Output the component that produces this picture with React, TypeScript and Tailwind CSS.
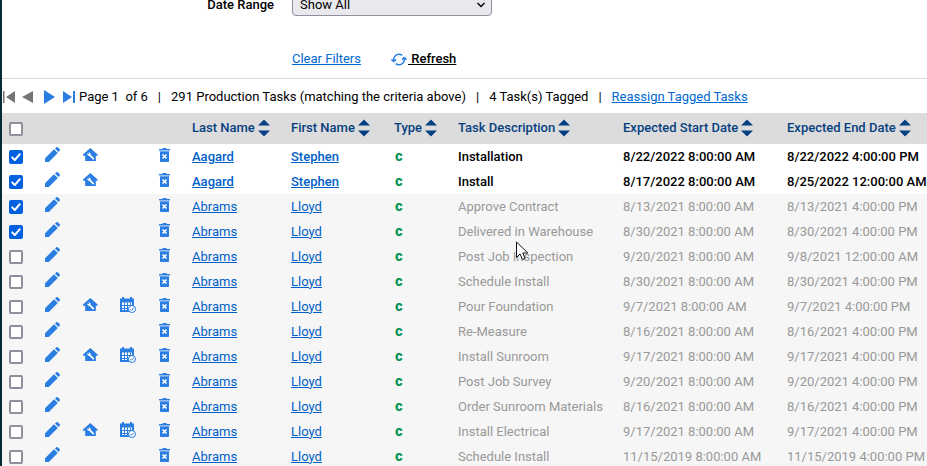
import React, { useState } from "react";

type Task = {
  last: string;
  first: string;
  task: string;
  start: string;
  end: string;
  tagged?: boolean;
  open?: boolean;
  job?: boolean;
  schedule?: boolean;
};

const tasks: Task[] = [
  { last: "Aagard", first: "Stephen", task: "Installation", start: "8/22/2022 8:00:00 AM", end: "8/22/2022 4:00:00 PM", tagged: true, open: true, job: true },
  { last: "Aagard", first: "Stephen", task: "Install", start: "8/17/2022 8:00:00 AM", end: "8/25/2022 12:00:00 AM", tagged: true, open: true, job: true },
  { last: "Abrams", first: "Lloyd", task: "Approve Contract", start: "8/13/2021 8:00:00 AM", end: "8/13/2021 4:00:00 PM", tagged: true },
  { last: "Abrams", first: "Lloyd", task: "Delivered in Warehouse", start: "8/30/2021 8:00:00 AM", end: "8/30/2021 4:00:00 PM", tagged: true },
  { last: "Abrams", first: "Lloyd", task: "Post Job Inspection", start: "9/20/2021 8:00:00 AM", end: "9/8/2021 12:00:00 AM" },
  { last: "Abrams", first: "Lloyd", task: "Schedule Install", start: "8/30/2021 8:00:00 AM", end: "8/30/2021 4:00:00 PM" },
  { last: "Abrams", first: "Lloyd", task: "Pour Foundation", start: "9/7/2021 8:00:00 AM", end: "9/7/2021 4:00:00 PM", job: true, schedule: true },
  { last: "Abrams", first: "Lloyd", task: "Re-Measure", start: "8/16/2021 8:00:00 AM", end: "8/16/2021 4:00:00 PM" },
  { last: "Abrams", first: "Lloyd", task: "Install Sunroom", start: "9/17/2021 8:00:00 AM", end: "9/17/2021 4:00:00 PM", job: true, schedule: true },
  { last: "Abrams", first: "Lloyd", task: "Post Job Survey", start: "9/20/2021 8:00:00 AM", end: "9/20/2021 4:00:00 PM" },
  { last: "Abrams", first: "Lloyd", task: "Order Sunroom Materials", start: "8/16/2021 8:00:00 AM", end: "8/16/2021 4:00:00 PM" },
  { last: "Abrams", first: "Lloyd", task: "Install Electrical", start: "9/17/2021 8:00:00 AM", end: "9/17/2021 4:00:00 PM", job: true, schedule: true },
  { last: "Abrams", first: "Lloyd", task: "Schedule Install", start: "11/15/2019 8:00:00 AM", end: "11/15/2019 4:00:00 PM" },
];

const sortable = ["Last Name", "First Name", "Type", "Task Description", "Expected Start Date", "Expected End Date"];

function Checkbox({ label, initial = false }: { label: string; initial?: boolean }) {
  const [checked, setChecked] = useState(initial);
  return (
    <label className="grid w-[14px]">
      <input
        type="checkbox"
        aria-label={label}
        checked={checked}
        onChange={(e) => setChecked(e.target.checked)}
        className="peer col-start-1 row-start-1 size-[14px] appearance-none rounded-[2px] border-2 border-[#8f8f9d] bg-white checked:border-[#0060df] checked:bg-[#0060df]"
      />
      <svg viewBox="0 0 14 14" className="invisible col-start-1 row-start-1 size-[14px] peer-checked:visible" fill="none" stroke="#fff" strokeWidth="2" strokeLinecap="round" strokeLinejoin="round">
        <path d="M3.2 7.4 5.8 10l5-5.8" />
      </svg>
    </label>
  );
}

function PencilIcon() {
  return (
    <svg viewBox="0 0 16 16" className="size-4" fill="#2a7de1">
      <path d="M0 11.300 9 2.300l3.800 3.800-9 9H0z" />
      <path d="M10 1.500 11.200.4c.5-.5 1.200-.5 1.700 0l1.700 1.700c.5.5.5 1.200 0 1.700L13.500 5z" />
    </svg>
  );
}

function HouseIcon() {
  return (
    <svg viewBox="0 0 15 14" className="h-[14px] w-[15px]" fill="#2a7de1">
      <path d="M7.300 0 14.600 6.500v1.200H12.800V13H2.200V7.700H0V6.500z" />
      <path d="m6 6.300 4.300 4.300" stroke="#fff" strokeWidth="1.700" strokeLinecap="round" />
      <circle cx="5.900" cy="6.100" r="1.700" fill="#fff" />
      <path d="M4 4.100 5.700 5.900" stroke="#2a7de1" strokeWidth="1.200" />
    </svg>
  );
}

function CalendarIcon() {
  return (
    <svg viewBox="0 0 16 16" className="size-4" fill="none">
      <path d="M1 3.500h12v10.500H1z" fill="#fff" stroke="#2a7de1" strokeWidth="2" />
      <path d="M0 1.500h14v4H0zM2 0h2v3H2zM10 0h2v3h-2z" fill="#2a7de1" />
      <path d="M1 8.500h12M1 11.500h12M4.500 5.500v9M7.500 5.500v9M10.500 5.500v9" stroke="#2a7de1" />
      <circle cx="12" cy="12" r="3.500" fill="#fff" stroke="#2a7de1" />
      <path d="m10.500 12.200 1.100 1.100 2.100-2.600" stroke="#2a7de1" />
    </svg>
  );
}

function TrashIcon() {
  return (
    <svg viewBox="0 0 11 14" className="h-[14px] w-[11px]" fill="#2a7de1">
      <path d="M3.500 0h4v1H11v1.300H0V1h3.500z" />
      <path d="M.5 2.300h10v1.500H.5z" opacity=".45" />
      <path d="M1 3.500h9V13c0 .6-.4 1-1 1H2c-.6 0-1-.4-1-1z" />
      <path d="m3.500 6.500 4 4m0-4-4 4" stroke="#fff" strokeWidth="1.600" />
    </svg>
  );
}

function SortIcon() {
  return (
    <svg viewBox="0 0 12 18" className="h-[18px] w-3 shrink-0" fill="#063f80">
      <path d="M6 .5 12 6.500H0zM6 17.500 12 11.500H0z" />
    </svg>
  );
}

function RefreshIcon() {
  return (
    <svg viewBox="0 0 16 14" className="h-[14px] w-4" fill="none" stroke="#2a7de1" strokeWidth="1.500">
      <path d="M2.700 9V7.300C2.700 4.500 5 2.200 8 2.200c1.300 0 2.300.4 3.200 1.200M13.300 6v1.700c0 2.800-2.300 5.100-5.300 5.100-1.300 0-2.300-.4-3.200-1.200" />
      <path d="M.4 7.400 2.700 9.500 5 7.400M11 7.600l2.300-2.100 2.300 2.100" />
    </svg>
  );
}

function Cursor() {
  return (
    <svg viewBox="0 0 13 20" className="pointer-events-none absolute left-[514px] top-[241px] h-5 w-[13px]" fill="#fff" stroke="#10101c">
      <path d="M.5 1v15.500L4 13l2.500 5.500 2.500-1L6.800 12h5z" />
    </svg>
  );
}

function PagerButton({ label, children }: { label: string; children: React.ReactNode }) {
  return (
    <button type="button" aria-label={label} className="flex h-4 items-center">
      {children}
    </button>
  );
}

function IconButton({ label, children }: { label: string; children: React.ReactNode }) {
  return (
    <button type="button" aria-label={label} className="mb-1 flex h-4 items-center">
      {children}
    </button>
  );
}

function Filters() {
  return (
    <form className="border-b border-[#d9d9d9]" onSubmit={(e) => e.preventDefault()}>
      <div className="flex h-4 items-end">
        <label htmlFor="range" className="w-[272px] font-medium leading-[22px] text-right">
          Date Range
        </label>
        <div className="ml-[18px] grid w-[200px] items-center">
          <select id="range" className="col-start-1 row-start-1 h-[22px] w-full appearance-none rounded-[4px] border border-[#8f8f9d] bg-[#e9e9ed] px-[7px] text-black">
            <option>Show All</option>
          </select>
          <svg viewBox="0 0 8 6" className="pointer-events-none col-start-1 row-start-1 mr-[7px] h-[6px] w-2 justify-self-end" fill="none" stroke="#000" strokeWidth="1.500">
            <path d="m.5 1 3.500 3.500L7.500 1" />
          </svg>
        </div>
      </div>
      <div className="ml-[290px] flex items-center gap-[30px] pb-[9px] pt-[33px] leading-5">
        <a href="#clear" className="text-[#0069d2] underline">Clear Filters</a>
        <a href="#refresh" className="flex items-center gap-px font-medium text-black">
          <RefreshIcon />
          <span className="whitespace-pre underline"> Refresh</span>
        </a>
      </div>
    </form>
  );
}

function Pager() {
  return (
    <div className="flex items-center whitespace-pre pb-[7px] pt-[9px] leading-[18px]">
      <nav aria-label="Pages" className="flex items-center">
        <PagerButton label="First page">
          <svg viewBox="0 0 13 14" className="h-[14px] w-[13px]" fill="#757575"><path d="M1 1h1.500v12H1zM13 1v12L4 7z" /></svg>
        </PagerButton>
        <PagerButton label="Previous page">
          <svg viewBox="0 0 18 14" className="h-[14px] w-[18px]" fill="#757575"><path d="M18 1v12L7 7z" /></svg>
        </PagerButton>
        <PagerButton label="Next page">
          <svg viewBox="0 0 22 14" className="h-[14px] w-[22px]" fill="#2a7de1"><path d="M11 0v14L22 7z" /></svg>
        </PagerButton>
        <PagerButton label="Last page">
          <svg viewBox="0 0 20 14" className="h-[14px] w-5" fill="#2a7de1"><path d="M8 1v12l9-6zM18 1h2v12h-2z" /></svg>
        </PagerButton>
      </nav>
      <div className="ml-1 flex gap-[10px]">
        <span>Page 1  of 6</span>
        <span>|</span>
        <span>291 Production Tasks (matching the criteria above)</span>
        <span>|</span>
        <span>4 Task(s) Tagged</span>
        <span>|</span>
        <a href="#reassign" className="text-[#0069d2] underline">Reassign Tagged Tasks</a>
      </div>
    </div>
  );
}

function TaskRow({ t }: { t: Task }) {
  const tone = t.open ? "bg-white font-medium text-black" : "bg-[#f6f6f6] text-[#999999]";
  return (
    <tr className={`h-[25px] ${tone}`}>
      <td className="pl-[7px]"><Checkbox label={`Tag ${t.task}`} initial={t.tagged} /></td>
      <td><IconButton label="Edit"><PencilIcon /></IconButton></td>
      <td>{t.job && <IconButton label="Job"><HouseIcon /></IconButton>}</td>
      <td>{t.schedule && <IconButton label="Schedule"><CalendarIcon /></IconButton>}</td>
      <td><IconButton label="Delete"><TrashIcon /></IconButton></td>
      <td><a href="#last" className="text-[#0060c8] underline">{t.last}</a></td>
      <td><a href="#first" className="text-[#0060c8] underline">{t.first}</a></td>
      <td className="pb-[2px] pl-px font-[Inter,sans-serif] font-extrabold text-[#079455]">c</td>
      <td>{t.task}</td>
      <td>{t.start}</td>
      <td>{t.end}</td>
    </tr>
  );
}

export default function App() {
  return (
    <main className="relative h-screen overflow-hidden border-l-2 border-[#052b35] bg-white font-[Roboto,sans-serif] text-[13px] text-black">
      <Filters />
      <Pager />
      <table className="w-full table-fixed whitespace-nowrap text-left leading-5">
        <colgroup>
          <col className="w-[43px]" />
          <col className="w-[38px]" />
          <col className="w-[37px]" />
          <col className="w-[39px]" />
          <col className="w-[33px]" />
          <col className="w-[99px]" />
          <col className="w-[103px]" />
          <col className="w-[64px]" />
          <col className="w-[165px]" />
          <col className="w-[164px]" />
          <col />
        </colgroup>
        <thead>
          <tr className="h-[31px] bg-[#dcdcdc] text-[#063f80]">
            <th className="pl-[7px]"><Checkbox label="Tag all tasks" /></th>
            <td colSpan={4} />
            {sortable.map((name) => (
              <th key={name} className="pb-[2px] font-medium">
                <button type="button" className="flex items-center gap-[3px]">
                  {name}
                  <SortIcon />
                </button>
              </th>
            ))}
          </tr>
        </thead>
        <tbody>
          {tasks.map((t, i) => <TaskRow key={i} t={t} />)}
        </tbody>
      </table>
      <Cursor />
    </main>
  );
}
